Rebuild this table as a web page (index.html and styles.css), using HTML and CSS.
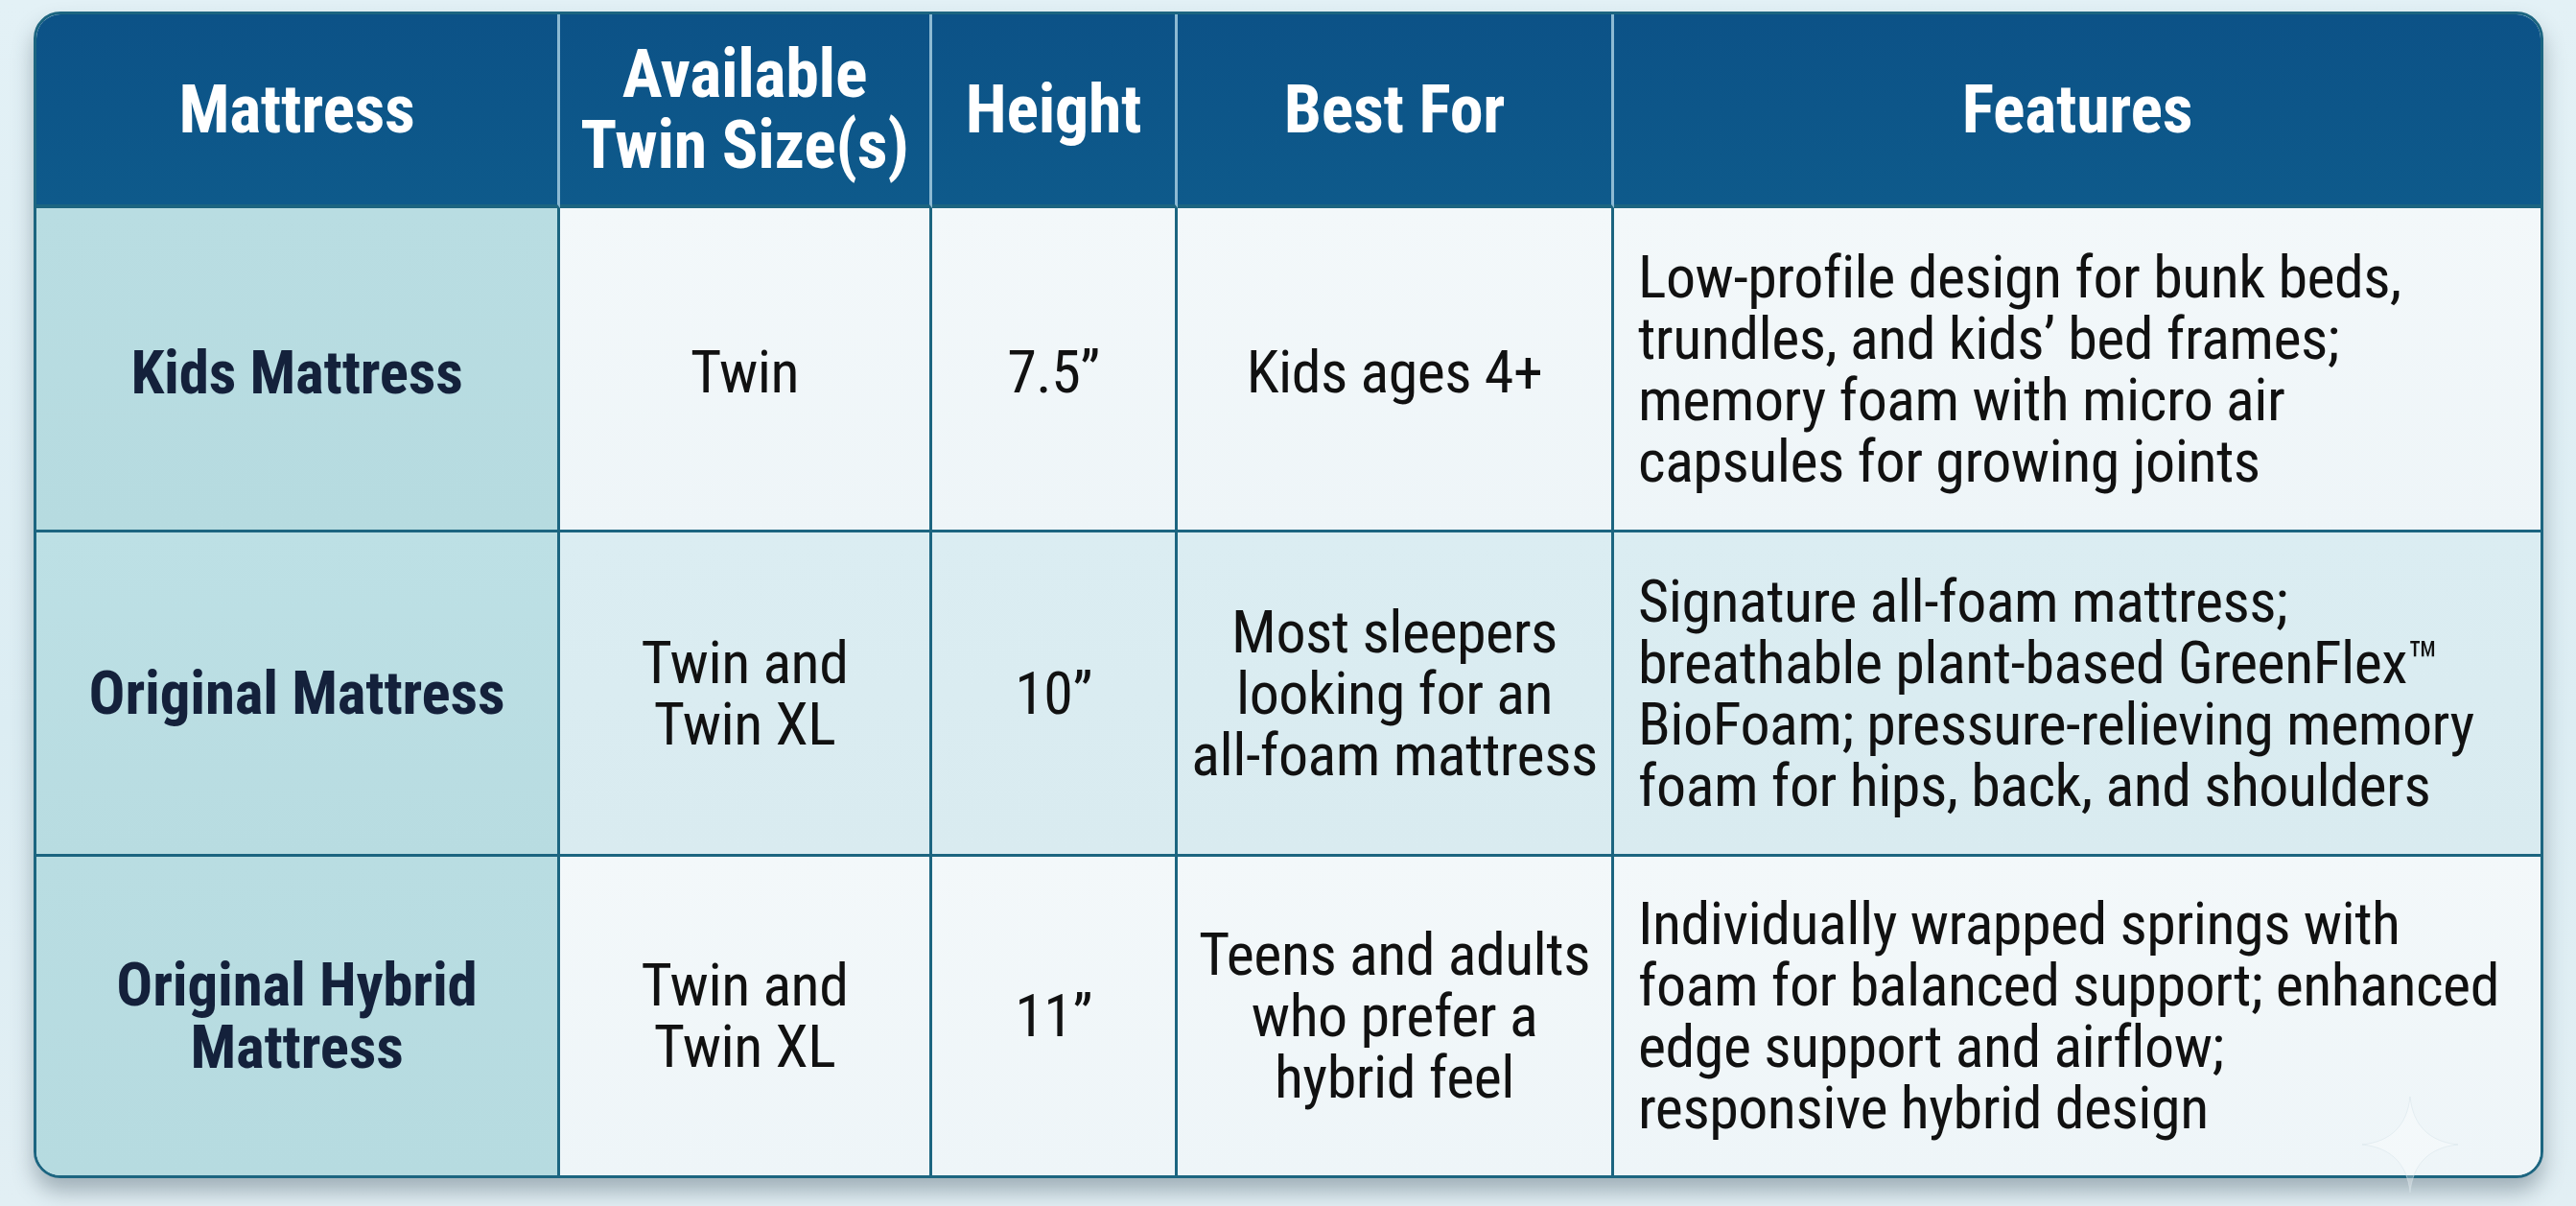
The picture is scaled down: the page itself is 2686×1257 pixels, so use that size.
FILE: index.html
```html
<!DOCTYPE html>
<html lang="en">
<head>
<meta charset="utf-8">
<title>Twin Mattress Comparison</title>
<link rel="stylesheet" href="styles.css">
</head>
<body>
<div class="page">
  <div class="table">
    <div class="cell head">Mattress</div>
    <div class="cell head">Available<br>Twin Size(s)</div>
    <div class="cell head">Height</div>
    <div class="cell head">Best For</div>
    <div class="cell head last">Features</div>

    <div class="cell name first">Kids Mattress</div>
    <div class="cell first">Twin</div>
    <div class="cell first">7.5”</div>
    <div class="cell first">Kids ages 4+</div>
    <div class="cell feat last">Low-profile design for bunk beds,<br>trundles, and kids’ bed frames;<br>memory foam with micro air<br>capsules for growing joints</div>

    <div class="cell name alt">Original Mattress</div>
    <div class="cell alt">Twin and<br>Twin XL</div>
    <div class="cell alt">10”</div>
    <div class="cell alt">Most sleepers<br>looking for an<br>all-foam mattress</div>
    <div class="cell feat alt last">Signature all-foam mattress;<br>breathable plant-based GreenFlex™<br>BioFoam; pressure-relieving memory<br>foam for hips, back, and shoulders</div>

    <div class="cell name bottom">Original Hybrid<br>Mattress</div>
    <div class="cell bottom">Twin and<br>Twin XL</div>
    <div class="cell bottom">11”</div>
    <div class="cell bottom">Teens and adults<br>who prefer a<br>hybrid feel</div>
    <div class="cell feat bottom last">Individually wrapped springs with<br>foam for balanced support; enhanced<br>edge support and airflow;<br>responsive hybrid design</div>
  </div>
  <svg class="sparkle" viewBox="0 0 100 100" width="100" height="100" aria-hidden="true">
    <path d="M50 0 C53 30 70 47 100 50 C70 53 53 70 50 100 C47 70 30 53 0 50 C30 47 47 30 50 0 Z" fill="#ffffff" fill-opacity="0.3" stroke="#d6e4ea" stroke-opacity="0.5" stroke-width="1"/>
  </svg>
</div>
</body>
</html>
```
FILE: styles.css
```css
html, body {
  margin: 0;
  padding: 0;
}
body {
  width: 2686px;
  height: 1257px;
  background: linear-gradient(180deg, #e3f1f6 0%, #dcedf3 60%, #e2eff4 100%);
  font-family: "Roboto Condensed", "Liberation Sans Narrow", "DejaVu Sans Condensed", "Roboto", sans-serif;
  overflow: hidden;
}
.page {
  position: relative;
  padding: 12px 34px 29px 35px;
  box-sizing: border-box;
  width: 2686px;
  height: 1257px;
}
.table {
  display: grid;
  grid-template-columns: 546px 388px 256px 455px 1fr;
  grid-template-rows: 202px 338px 338px 1fr;
  height: 1216px;
  box-sizing: border-box;
  border: 3px solid #1c6580;
  border-radius: 28px;
  overflow: hidden;
  background: #f0f6f9;
  box-shadow: 0 14px 22px rgba(40, 60, 75, 0.35);
}
.cell {
  display: flex;
  align-items: center;
  justify-content: center;
  text-align: center;
  box-sizing: border-box;
  border-right: 3px solid #1c6580;
  border-bottom: 3px solid #1c6580;
  font-size: 62px;
  line-height: 64px;
  letter-spacing: -0.5px;
  color: #111;
  background: linear-gradient(180deg, #f3f8fa 0%, #eef5f8 100%);
}
.cell.first {
  padding-top: 7px;
}
.cell.last {
  border-right: none;
}
.cell.bottom {
  border-bottom: none;
}
.head {
  background: linear-gradient(180deg, #0c5287 0%, #0e5a8b 100%);
  color: #ffffff;
  font-weight: 700;
  font-size: 70px;
  line-height: 74px;
  letter-spacing: -0.3px;
  border-right: 3px solid #8dbad3;
  border-bottom: 4px solid #1c6580;
}
.head.last {
  border-right: none;
}
.name {
  background: linear-gradient(180deg, #b9dde2 0%, #b6dbe0 100%);
  color: #14213b;
  font-weight: 700;
  font-size: 63px;
  line-height: 65px;
  letter-spacing: -0.2px;
}
.alt {
  background: linear-gradient(180deg, #dbedf2 0%, #d9ebf0 100%);
}
.name.alt {
  background: linear-gradient(180deg, #bde0e5 0%, #b8dce1 100%);
}
.feat {
  justify-content: flex-start;
  text-align: left;
  padding-left: 25px;
}
.sparkle {
  position: absolute;
  left: 2463px;
  top: 1143px;
}
```
